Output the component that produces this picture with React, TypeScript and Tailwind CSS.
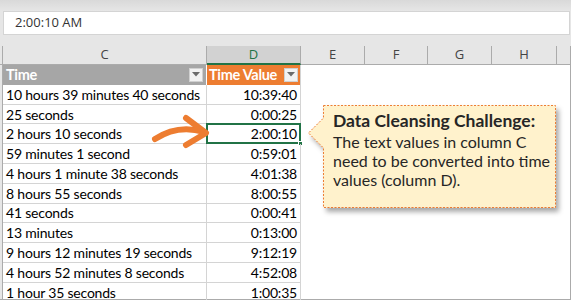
import React from "react";

const ROWS: [string, string][] = [
  ["10 hours 39 minutes 40 seconds", "10:39:40"],
  ["25 seconds", "0:00:25"],
  ["2 hours 10 seconds", "2:00:10"],
  ["59 minutes 1 second", "0:59:01"],
  ["4 hours 1 minute 38 seconds", "4:01:38"],
  ["8 hours 55 seconds", "8:00:55"],
  ["41 seconds", "0:00:41"],
  ["13 minutes", "0:13:00"],
  ["9 hours 12 minutes 19 seconds", "9:12:19"],
  ["4 hours 52 minutes 8 seconds", "4:52:08"],
  ["1 hour 35 seconds", "1:00:35"],
];

const COLS = [
  { name: "E", w: "w-[64px]" },
  { name: "F", w: "w-[63px]" },
  { name: "G", w: "w-[64px]" },
  { name: "H", w: "w-[65px]" },
  { name: "", w: "w-[13px]" },
];

function FilterButton() {
  return (
    <div className="w-[14px] h-[14px] shrink-0 bg-[#f2f2f2] border border-[#d0d0d0] flex items-center justify-center">
      <svg width="8" height="5" viewBox="0 0 8 5">
        <path d="M0 0 L8 0 L4 4.5 Z" fill="#6b6b6b" />
      </svg>
    </div>
  );
}

export default function App() {
  return (
    <div className="w-[571px] h-[300px] overflow-hidden bg-[#e6e6e6] flex flex-col font-['Lato',sans-serif] text-black">
      {/* top band */}
      <div className="h-[11px] bg-gradient-to-b from-[#d9d9d9] to-[#e6e6e6]" />

      {/* formula bar */}
      <div className="ml-[3px] mr-[1px] h-[24px] bg-white border border-[#d4d4d4] flex items-center pl-[11px] text-[13px] text-[#333] font-['Open_Sans',sans-serif]">
        2:00:10 AM
      </div>

      <div className="h-[11px]" />

      {/* sheet */}
      <div className="flex-1 flex flex-col border-r border-b border-[#ababab] min-h-0">
        {/* column headers */}
        <div className="flex h-[19px] border-b border-[#ababab] text-[13px] text-[#444] font-['Open_Sans',sans-serif]">
          <div className="w-[3px] border-r border-[#ababab]" />
          <div className="w-[204px] flex items-center justify-center border-r border-[#ababab]">C</div>
          <div className="w-[94px] flex items-center justify-center bg-[#d2d2d2] text-[#217346] border-b-2 border-[#217346] border-r border-r-[#ababab] -mb-px">
            D
          </div>
          {COLS.map((c, i) => (
            <div key={i} className={`${c.w} flex items-center justify-center border-r border-[#ababab] last:border-r-0`}>
              {c.name}
            </div>
          ))}
        </div>

        {/* grid body */}
        <div className="relative flex-1 bg-white flex min-h-0">
          <div className="w-[3px] bg-[#e6e6e6] border-r border-[#ababab]" />
          <div className="flex flex-col">
            {/* table header */}
            <div className="flex h-[19.8px] text-[14.5px] font-bold text-white tracking-[-0.3px]">
              <div className="w-[204px] bg-[#a6a6a6] flex items-center pl-[3px] pr-[3px] border-r border-white">
                <span className="flex-1">Time</span>
                <FilterButton />
              </div>
              <div className="w-[94px] bg-[#ed7d31] flex items-center pl-[2px] pr-[2px] border-r border-[#d4d4d4]">
                <span className="flex-1 whitespace-nowrap">Time Value</span>
                <FilterButton />
              </div>
            </div>
            {ROWS.map(([t, v], i) => (
              <div key={i} className="flex h-[19.8px] text-[14px] tracking-[-0.2px] shrink-0">
                <div className="w-[204px] flex items-center pl-[3px] border-r border-b border-[#d4d4d4] whitespace-nowrap">
                  {t}
                </div>
                <div className="relative w-[94px] flex items-center justify-end pr-[3px] border-r border-b border-[#d4d4d4]">
                  {v}
                  {i === 2 && (
                    <>
                      <div className="absolute -left-[1px] -top-[1px] -right-[1px] -bottom-[1px] border-2 border-[#217346]" />
                      <div className="absolute -right-[3px] -bottom-[3px] w-[5px] h-[5px] bg-[#217346] border border-white" />
                    </>
                  )}
                </div>
              </div>
            ))}
          </div>

          {/* arrow */}
          <svg className="absolute left-0 top-0 pointer-events-none" width="571" height="240" viewBox="0 0 571 240">
            <path d="M155 74 Q178 59 204 67" fill="none" stroke="#ed7d31" strokeWidth="6" strokeLinecap="round" />
            <path d="M186 53 L206 68 L186 80" fill="none" stroke="#ed7d31" strokeWidth="6" strokeLinecap="round" strokeLinejoin="round" />
          </svg>

          {/* callout */}
          <div className="absolute left-[308px] top-[40px]">
            <svg className="absolute left-0 top-0 overflow-visible" width="250" height="105" viewBox="0 0 250 105">
              <defs>
                <filter id="sh" x="-10%" y="-10%" width="130%" height="140%">
                  <feDropShadow dx="3" dy="4" stdDeviation="2.5" floodColor="#000" floodOpacity="0.35" />
                </filter>
              </defs>
              <path
                d="M15.5 0.5 H247.5 V102.5 H15.5 V43 L0.5 28 L15.5 13 Z"
                fill="#fff2cc"
                stroke="#ed7d31"
                strokeWidth="1"
                strokeDasharray="2 1.5"
                filter="url(#sh)"
              />
            </svg>
            <div className="relative pl-[25px] pt-[5px] w-[250px] text-[#262626] font-['Lato',sans-serif]">
              <div className="text-[17.5px] font-bold leading-[22px]">Data Cleansing Challenge:</div>
              <div className="text-[16px] leading-[19px]">
                The text values in column C
                <br />
                need to be converted into time
                <br />
                values (column D).
              </div>
            </div>
          </div>
        </div>
      </div>
    </div>
  );
}
